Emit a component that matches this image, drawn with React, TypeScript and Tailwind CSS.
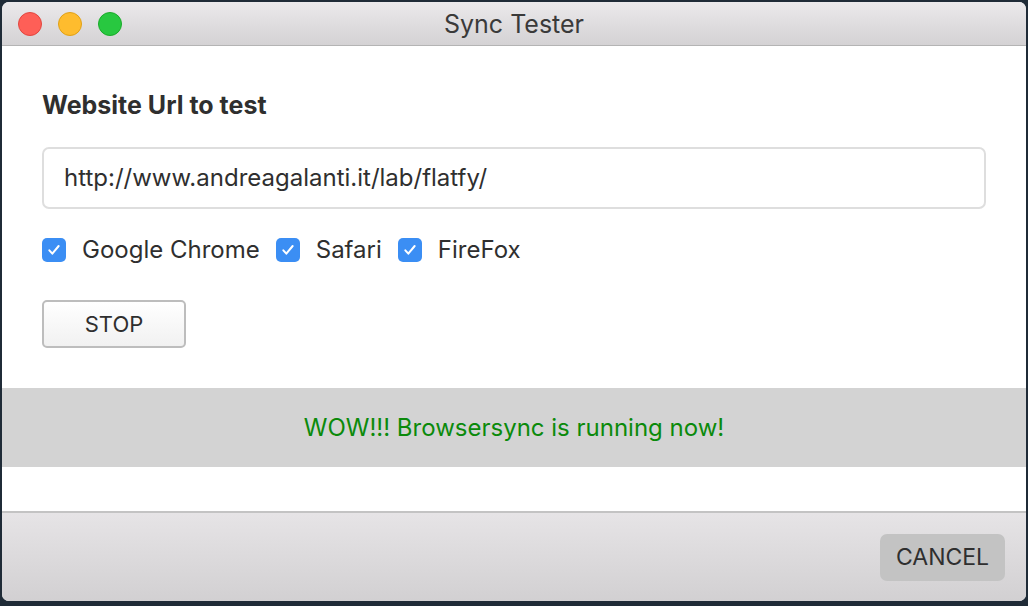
import * as React from "react"

const font = { fontFamily: '"Helvetica Neue", Inter, "Liberation Sans", sans-serif' }

function Check({ label }: { label: string }) {
  return (
    <label className="flex h-[28px] items-center gap-[16px]">
      <span className="flex h-[24px] w-[24px] items-center justify-center rounded-[5px] bg-[#3b8ef4]">
        <svg viewBox="0 0 24 24" className="h-[16px] w-[16px]" fill="none" stroke="white" strokeWidth="3" strokeLinecap="round" strokeLinejoin="round">
          <path d="M5 12.5l4.5 5L19 6" />
        </svg>
      </span>
      <span className="text-[24px] leading-[28px] text-[#2f2f2f]">{label}</span>
    </label>
  )
}

export default function App() {
  return (
    <div className="h-[606px] w-[1028px] bg-[#1f2b37] p-[2px] pb-[5px]" style={font}>
      <div className="flex h-full flex-col overflow-hidden rounded-[7px] bg-white">
        {/* title bar */}
        <div className="relative flex h-[44px] items-center border-b border-[#b4b4b4] bg-gradient-to-b from-[#ebe9eb] to-[#d4d2d4]">
          <div className="absolute left-[16px] top-[10px] flex gap-[16px]">
            <span className="h-[24px] w-[24px] rounded-full border border-[#e2463f] bg-[#fe5f57]" />
            <span className="h-[24px] w-[24px] rounded-full border border-[#e1a116] bg-[#febc2e]" />
            <span className="h-[24px] w-[24px] rounded-full border border-[#1aab29] bg-[#28c840]" />
          </div>
          <div className="w-full pt-[2px] text-center text-[25px] text-[#3a3a3a]">Sync Tester</div>
        </div>

        {/* body */}
        <div className="flex flex-col px-[40px] pt-[45px]">
          <h1 className="text-[25px] font-bold leading-[28px] text-[#2f2f2f]">Website Url to test</h1>
          <div className="mt-[28px] flex h-[62px] items-center rounded-[7px] border-2 border-[#dedede] px-[20px] text-[24px] text-[#2f2f2f]">
            http://www.andreagalanti.it/lab/flatfy/
          </div>
          <div className="mt-[27px] flex items-center gap-[16px]">
            <Check label="Google Chrome" />
            <Check label="Safari" />
            <Check label="FireFox" />
          </div>
          <button className="mt-[36px] h-[48px] w-[144px] rounded-[5px] border-2 border-[#bdbdbd] bg-gradient-to-b from-white to-[#f1f1f1] text-[22px] text-[#2f2f2f]">
            STOP
          </button>
        </div>

        <div className="mt-[40px] flex h-[79px] items-center justify-center bg-[#d3d3d3] text-[24px] text-[#0b8a0b]">
          WOW!!! Browsersync is running now!
        </div>

        <div className="h-[46px] border-b-[2px] border-[#c3c3c3]" />

        {/* footer */}
        <div className="flex flex-1 items-center justify-end bg-gradient-to-b from-[#e6e4e6] to-[#d2d0d2] px-[21px]">
          <button className="h-[47px] w-[125px] rounded-[7px] bg-[#c3c3c3] text-[23px] text-[#2f2f2f]">CANCEL</button>
        </div>
      </div>
    </div>
  )
}
